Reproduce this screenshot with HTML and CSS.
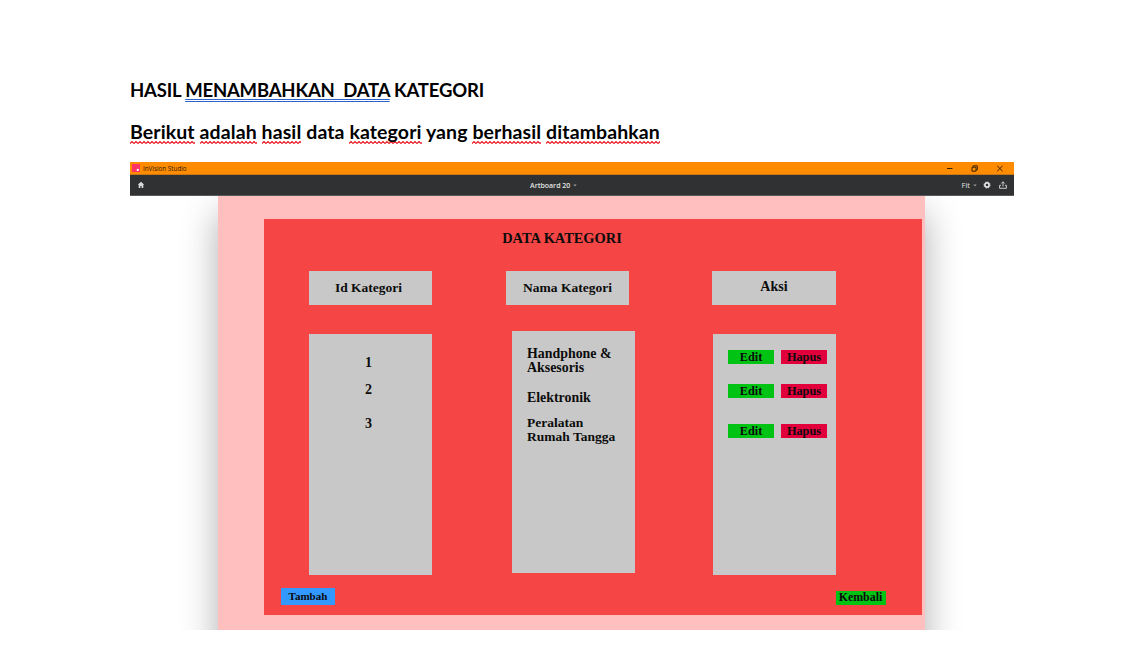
FILE: index.html
```
<!DOCTYPE html>
<html lang="id">
<head>
<meta charset="utf-8">
<title>Data Kategori</title>
<link rel="stylesheet" href="styles.css">
</head>
<body>
<main class="document">
  <h1 class="heading heading-caps">HASIL <span class="grammar">MENAMBAHKAN&nbsp; DATA</span> KATEGORI</h1>
  <h2 class="heading heading-sub"><span class="typo">Berikut</span> <span class="typo">adalah</span> <span class="typo">hasil</span> data <span class="typo">kategori</span> yang <span class="typo">berhasil</span> <span class="typo">ditambahkan</span></h2>
  <section class="window">
    <header class="titlebar">
      <svg class="app-icon" viewBox="0 0 8 8"><rect width="8" height="8" fill="#ff3366"/><rect x="4.8" y="4.9" width="2" height="2" fill="#fff"/></svg>
      <span class="app-name">InVision Studio</span>
      <svg class="window-controls" viewBox="0 0 58 9" fill="none" stroke="#3b2500" stroke-width="1"><path d="M1 4.500h5.500"/><path d="M26 3.200h4v4h-4zM27.300 3V1.800h4v4H30"/><path d="M51.200 1.800l5.400 5.400M56.600 1.800l-5.400 5.400"/></svg>
    </header>
    <nav class="toolbar">
      <svg class="home" viewBox="0 0 8 8" fill="#d8d8d8"><path d="M4 .8L.7 3.800h1V7h1.700V5h1.200v2h1.700V3.800h1z"/></svg>
      <span class="artboard-name">Artboard 20<svg class="caret" viewBox="0 0 4 3"><path d="M.3.500h3.400L2 2.400z" fill="#999"/></svg></span>
      <span class="zoom">Fit<svg class="caret" viewBox="0 0 4 3"><path d="M.3.500h3.400L2 2.400z" fill="#999"/></svg></span>
      <svg class="gear" viewBox="0 0 8 8"><circle cx="4" cy="4" r="2.100" fill="none" stroke="#e2e2e2" stroke-width="1.700"/><circle cx="4" cy="4" r="3.100" fill="none" stroke="#e2e2e2" stroke-width=".9" stroke-dasharray="1.300 1.135"/></svg>
      <svg class="share" viewBox="0 0 8 8" fill="none" stroke="#dedede" stroke-width=".9"><path d="M4 5.500V.900M2.300 2.500L4 .800l1.700 1.700M2 4.300H.6v3h6.800v-3H6"/></svg>
    </nav>
    <div class="canvas">
      <div class="artboard">
        <div class="panel">
          <h3 class="panel-title">DATA KATEGORI</h3>
          <div class="columns">
            <div class="column column-id">
              <div class="column-head">Id Kategori</div>
              <div class="column-body"><span>1</span><span>2</span><span>3</span></div>
            </div>
            <div class="column column-name">
              <div class="column-head">Nama Kategori</div>
              <div class="column-body"><span class="phone">Handphone &amp;<br>Aksesoris</span><span class="electronic">Elektronik</span><span class="household">Peralatan<br>Rumah Tangga</span></div>
            </div>
            <div class="column column-action">
              <div class="column-head">Aksi</div>
              <div class="column-body">
                <div class="actions"><span class="edit">Edit</span><span class="delete">Hapus</span></div>
                <div class="actions"><span class="edit">Edit</span><span class="delete">Hapus</span></div>
                <div class="actions"><span class="edit">Edit</span><span class="delete">Hapus</span></div>
              </div>
            </div>
          </div>
          <footer class="panel-footer"><span class="add">Tambah</span><span class="back">Kembali</span></footer>
        </div>
      </div>
    </div>
  </section>
</main>
</body>
</html>
```
FILE: styles.css
```
* { box-sizing: border-box; }
body { margin: 0; background: #fff; overflow: hidden; }
.document { width: 884px; margin-left: 130px; padding-top: 78px; }
.heading { margin: 0; height: 42px; font: bold 19px/24px Lato, sans-serif; color: #000; white-space: nowrap; }
.heading-caps { font-size: 18.500px; line-height: 24px; letter-spacing: -.19px; }
.heading-sub { font-size: 19.500px; letter-spacing: .1px; }
.grammar { text-decoration: underline double #2d63c8 1px; text-underline-offset: 2px; text-decoration-skip-ink: none; }
.typo { background: url("data:image/svg+xml,%3Csvg xmlns='http://www.w3.org/2000/svg' width='4' height='3'%3E%3Cpath d='M0 2.500L2 .5L4 2.500' fill='none' stroke='%23e8101c' stroke-width='1.100'/%3E%3C/svg%3E") 0 100% repeat-x; padding-bottom: 1px; }
.window { height: 468px; overflow: hidden; }
.titlebar { display: flex; align-items: center; height: 13px; padding: 0 10px 0 2px; background: #ff8c00; border-bottom: 1px solid #c87816; }
.app-icon { width: 8px; height: 8px; }
.app-name { margin-left: 3px; padding-top: 1px; font: 6.300px/12px "Open Sans", sans-serif; color: #2c1900; }
.window-controls { width: 58px; height: 9px; margin-left: auto; }
.toolbar { display: flex; align-items: center; height: 21px; padding: 0 7px; background: #2f3132; border-bottom: 1px solid #58595a; color: #e4e4e4; font: 600 7px/20px "Open Sans", sans-serif; }
.home { width: 8px; height: 8px; }
.artboard-name { margin-left: 385px; padding-top: 1px; }
.caret { width: 4px; height: 3px; margin-left: 3px; vertical-align: 1px; }
.zoom { margin-left: auto; font-size: 7.500px; font-weight: 400; }
.gear { width: 8px; height: 8px; margin-left: 6px; }
.share { width: 8px; height: 8px; margin-left: 8px; }
.canvas { height: 434px; padding-left: 88.400px; overflow: hidden; }
.artboard { width: 707px; height: 480px; padding: 23px 0 0 45.600px; background: #ffbfbf; box-shadow: 0 17px 34px rgba(0,0,0,.32); }
.panel { width: 658px; height: 396px; padding: 10px 36px 0 17px; background: #f54545; color: #0c0c0c; font: bold 13.500px/14px "Liberation Serif", serif; }
.panel-title { width: 120px; height: 42px; margin: 0 0 0 221px; font-size: 14.400px; line-height: 18px; white-space: nowrap; text-align: center; }
.columns { display: flex; height: 305px; margin-left: 28px; }
.column { width: 123px; }
.column-name { width: 129px; margin-left: 74px; }
.column-action { width: 124px; margin-left: 77px; }
.column-head { width: 123px; height: 34px; line-height: 33px; text-align: center; background: #c8c8c8; white-space: nowrap; }
.column-id .column-head { padding-right: 4px; }
.column-action .column-head { width: 124px; font-size: 14px; line-height: 31px; }
.column-body { display: flex; flex-direction: column; width: 123px; height: 241px; margin-top: 29px; background: #c8c8c8; }
.column-id .column-body { align-items: center; padding: 22px 4px 0 0; font-size: 14px; }
.column-id span { height: 27px; }
.column-id span + span { height: 34px; }
.column-name .column-body { margin: 26px 0 0 6px; padding: 16px 0 0 15px; height: 242px; white-space: nowrap; }
.phone { height: 44px; font-size: 13.900px; }
.electronic { height: 25px; font-size: 13.900px; }
.household { font-size: 13.500px; }
.column-action .column-body { margin-left: 1px; padding: 16px 0 0 15px; }
.actions { display: flex; gap: 7px; height: 34px; font-size: 12.300px; }
.actions:nth-child(2) { height: 40px; }
.edit, .delete { width: 46px; height: 14px; line-height: 14px; text-align: center; }
.edit, .back { background: #00c314; }
.delete { background: #e1003c; }
.panel-footer { display: flex; justify-content: space-between; align-items: flex-start; padding-top: 12px; font-size: 11px; text-align: center; }
.add { width: 54px; height: 17px; line-height: 17px; background: #3399ff; }
.back { width: 50px; height: 14px; margin-top: 3px; padding-right: 1px; font-size: 11.900px; line-height: 13px; }
```
